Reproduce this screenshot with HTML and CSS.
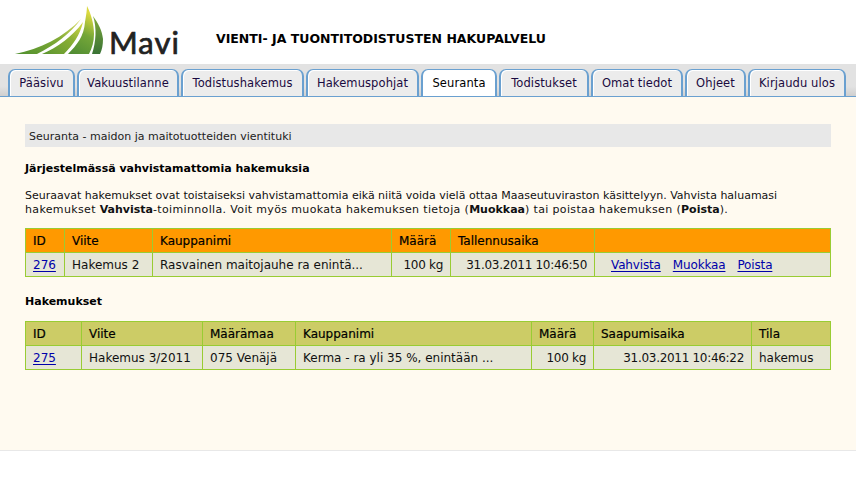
FILE: index.html
```html
<!DOCTYPE html>
<html>
  <head>
    <meta charset="utf-8">
    <title>Seuranta</title>
    <link rel="stylesheet" href="styles.css">
  </head>
  <body>
    <div class="header">
      <div class="logo">
        <svg width="90" height="52" viewBox="14 4 90 52" xmlns="http://www.w3.org/2000/svg">
          <defs>
            <linearGradient id="leafA" x1="0" y1="1" x2="1" y2="0">
              <stop offset="0" stop-color="#4f8f2e"/>
              <stop offset="0.55" stop-color="#82ab36"/>
              <stop offset="1" stop-color="#dfe06a"/>
            </linearGradient>
            <linearGradient id="leafB" x1="0" y1="1" x2="1" y2="0">
              <stop offset="0" stop-color="#5b9530"/>
              <stop offset="0.6" stop-color="#8cb036"/>
              <stop offset="1" stop-color="#d8dc48"/>
            </linearGradient>
            <linearGradient id="leafC" x1="0" y1="1" x2="0.3" y2="0">
              <stop offset="0" stop-color="#4d8a33"/>
              <stop offset="0.55" stop-color="#74a638"/>
              <stop offset="1" stop-color="#dcd93e"/>
            </linearGradient>
            <linearGradient id="leafD" x1="0" y1="1" x2="0" y2="0">
              <stop offset="0" stop-color="#3a7336"/>
              <stop offset="1" stop-color="#7ea83a"/>
            </linearGradient>
          </defs>
          <path d="M15 54C40 49 64 37 81 19C70 34 55 45 37 54Z" fill="url(#leafA)"/>
          <path d="M42 54C58 47 72 37 83 22C80 35 73 45 64 54Z" fill="url(#leafB)"/>
          <path d="M68 54C77 45 84 36 85 22C86 16 87 10 87 6C91 14 94 24 94 34C94 42 92 48 89 54Z" fill="url(#leafC)"/>
          <path d="M92 54C96 42 97 28 93 16C98 23 102 30 103 39C103 45 102 50 100 54Z" fill="url(#leafD)"/>
        </svg>
        <span class="logo-name">Mavi</span>
      </div>
      <div class="site-title">VIENTI- JA TUONTITODISTUSTEN HAKUPALVELU</div>
    </div>

    <div class="nav">
      <a class="tab w67">Pääsivu</a>
      <a class="tab w102">Vakuustilanne</a>
      <a class="tab w123">Todistushakemus</a>
      <a class="tab w113">Hakemuspohjat</a>
      <a class="tab active w76">Seuranta</a>
      <a class="tab w90">Todistukset</a>
      <a class="tab w92">Omat tiedot</a>
      <a class="tab w61">Ohjeet</a>
      <a class="tab w98">Kirjaudu ulos</a>
    </div>

    <div class="content">
      <div class="page-title">Seuranta - maidon ja maitotuotteiden vientituki</div>

      <h2>Järjestelmässä vahvistamattomia hakemuksia</h2>
      <p>Seuraavat hakemukset ovat toistaiseksi vahvistamattomia eikä niitä voida vielä ottaa Maaseutuviraston käsittelyyn. Vahvista haluamasi <span class="wide">hakemukset <b>Vahvista</b>-toiminnolla. Voit myös muokata hakemuksen tietoja (<b>Muokkaa</b>) tai poistaa hakemuksen (<b>Poista</b>).</span></p>

      <table class="list orange">
        <colgroup>
          <col class="w39"><col class="w88"><col class="w239"><col class="w59"><col class="w144"><col>
        </colgroup>
        <tr>
          <th>ID</th><th>Viite</th><th>Kauppanimi</th><th>Määrä</th><th>Tallennusaika</th><th></th>
        </tr>
        <tr>
          <td><a href="#">276</a></td>
          <td>Hakemus 2</td>
          <td>Rasvainen maitojauhe ra enintä...</td>
          <td class="num">100 kg</td>
          <td class="num">31.03.2011 10:46:50</td>
          <td class="actions"><a href="#">Vahvista</a><a href="#">Muokkaa</a><a href="#">Poista</a></td>
        </tr>
      </table>

      <h2 class="second">Hakemukset</h2>

      <table class="list green">
        <colgroup>
          <col class="w56"><col class="w121"><col class="w93"><col class="w236"><col class="w62"><col class="w158"><col>
        </colgroup>
        <tr>
          <th>ID</th><th>Viite</th><th>Määrämaa</th><th>Kauppanimi</th><th>Määrä</th><th>Saapumisaika</th><th>Tila</th>
        </tr>
        <tr>
          <td><a href="#">275</a></td>
          <td>Hakemus 3/2011</td>
          <td>075 Venäjä</td>
          <td>Kerma - ra yli 35 %, enintään ...</td>
          <td class="num">100 kg</td>
          <td class="num">31.03.2011 10:46:22</td>
          <td>hakemus</td>
        </tr>
      </table>
    </div>
  </body>
</html>
```

FILE: styles.css
```css
* {
  box-sizing: border-box;
  margin: 0;
  padding: 0;
}

body {
  background: #fff;
  color: #000;
  font-family: 'DejaVu Sans', sans-serif;
  font-size: 11px;
}

.header {
  display: flex;
  align-items: flex-end;
  height: 64px;
  padding-left: 14px;
}

.logo {
  display: flex;
  align-items: flex-end;
  width: 202px;
  height: 60px;
  padding-bottom: 8px;
}

.logo svg {
  flex: none;
  margin-right: 5px;
}

.logo-name {
  font-family: 'Lato', sans-serif;
  font-size: 31px;
  line-height: 30px;
  letter-spacing: 1px;
  margin-bottom: -1px;
  color: #222;
  -webkit-text-stroke: 0.7px #222;
}

.site-title {
  font-size: 12.5px;
  font-weight: bold;
  margin-bottom: 18px;
}

.nav {
  display: flex;
  gap: 2px;
  height: 33px;
  padding: 5px 0 0 8px;
  background: linear-gradient(#e2e2e2, #e2e2e2 70%, #cfcfcf);
  border-bottom: 1px solid #6aa0d0;
}

.tab {
  flex: none;
  height: 27px;
  line-height: 27px;
  font-size: 11.5px;
  letter-spacing: 0.1px;
  text-align: center;
  white-space: nowrap;
  color: #1a0a40;
  background: #ececec;
  border: 2px solid #6aa0d0;
  border-top-width: 1px;
  border-bottom: none;
  border-radius: 7px 7px 0 0;
  box-shadow: inset 1px 1px 0 #fff;
}

.tab.active {
  background: #fff;
  color: #000;
}

.content {
  height: 354px;
  padding: 27px 25px 0;
  background: #fffaf0;
  border-bottom: 1px solid #e8e8e8;
}

.page-title {
  height: 23px;
  padding-left: 4px;
  line-height: 25px;
  background: #e8e8e8;
  font-size: 11px;
  color: #222;
}

h2 {
  margin-top: 15px;
  font-size: 11px;
  line-height: 14px;
}

h2.second {
  margin-top: 18px;
}

p {
  margin-top: 13px;
  line-height: 14px;
  font-size: 11px;
  color: #111;
}

.wide {
  letter-spacing: 0.35px;
}

.wide b {
  letter-spacing: 0;
}

.list {
  width: 806px;
  margin-top: 11px;
  table-layout: fixed;
  border-collapse: collapse;
  font-size: 12px;
}

h2.second + .list {
  margin-top: 12px;
}

.list th,
.list td {
  height: 24px;
  padding: 1px 7px 0;
  border: 1px solid #99cc33;
  text-align: left;
  font-weight: normal;
  white-space: nowrap;
  overflow: hidden;
}

.list th {
  -webkit-text-stroke: 0.2px #000;
}

.list td {
  background: #e6e6d6;
  color: #111;
}

.orange th {
  background: #ff9900;
}

.green th {
  background: #cccc66;
}

.list td.num {
  text-align: right;
  letter-spacing: -0.3px;
}

.list td.actions {
  padding-left: 16px;
  letter-spacing: -0.15px;
}

.actions a {
  margin-right: 12px;
}

a {
  color: #00a;
  text-underline-offset: 2px;
}

.w39 { width: 39px; }
.w56 { width: 56px; }
.w59 { width: 59px; }
.w61 { width: 61px; }
.w62 { width: 62px; }
.w67 { width: 67px; }
.w76 { width: 76px; }
.w88 { width: 88px; }
.w90 { width: 90px; }
.w92 { width: 92px; }
.w93 { width: 93px; }
.w98 { width: 98px; }
.w102 { width: 102px; }
.w113 { width: 113px; }
.w121 { width: 121px; }
.w123 { width: 123px; }
.w144 { width: 144px; }
.w158 { width: 158px; }
.w236 { width: 236px; }
.w239 { width: 239px; }
```
